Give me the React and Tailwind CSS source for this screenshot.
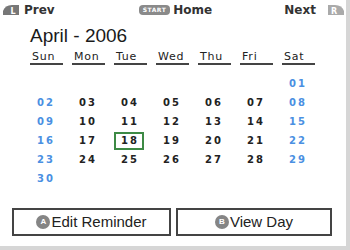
const weeks = [
  [null, null, null, null, null, null, '01'],
  ['02', '03', '04', '05', '06', '07', '08'],
  ['09', '10', '11', '12', '13', '14', '15'],
  ['16', '17', '18', '19', '20', '21', '22'],
  ['23', '24', '25', '26', '27', '28', '29'],
  ['30', null, null, null, null, null, null],
];

const days = ['Sun', 'Mon', 'Tue', 'Wed', 'Thu', 'Fri', 'Sat'];

function ShoulderIcon({ letter, flip, fill }) {
  return (
    <svg width="16" height="10" viewBox="0 0 16 10" className={flip ? '-scale-x-100' : ''}>
      <path d="M0 10 L0 6 Q2 0 9 0 L16 0 L16 10 Z" fill={fill} />
      <text x="10" y="8.5" fontSize="8" fontWeight="bold" fill="#fff" textAnchor="middle" fontFamily="DejaVu Sans, sans-serif" transform={flip ? 'translate(20 0) scale(-1 1)' : undefined}>{letter}</text>
    </svg>
  );
}

function ButtonIcon({ letter }) {
  return (
    <span className="w-[14px] h-[14px] rounded-full bg-[#858585] text-white text-[8px] font-bold leading-none flex items-center justify-center">
      {letter}
    </span>
  );
}

export default function App() {
  return (
    <div className="w-[350px] h-[250px] bg-white border-r-4 border-b-4 border-[#d6d6d6] flex flex-col font-['DejaVu_Sans',sans-serif] text-[#222]">
      <div className="h-[20px] flex items-center justify-between pl-[3px] pr-[2px] text-[12px] font-semibold text-[#333]">
        <div className="flex items-center gap-[5px]">
          <ShoulderIcon letter="L" fill="#777" />
          <span>Prev</span>
        </div>
        <div className="flex items-center gap-[3px] ml-[84px]">
          <span className="h-[10px] px-[4px] rounded-[4px] bg-[#8a8a8a] text-white text-[6px] font-bold leading-[10px] tracking-[0.5px]">START</span>
          <span>Home</span>
        </div>
        <div className="flex items-center gap-[12px] ml-auto">
          <span>Next</span>
          <ShoulderIcon letter="R" flip fill="#aaa" />
        </div>
      </div>

      <div className="ml-[30px] mt-[4px] text-[19px] leading-[24px] font-['Liberation_Sans',Arial,sans-serif] text-[#1a1a1a]">
        April - 2006
      </div>

      <div className="ml-[30px] mt-[3px] grid grid-cols-[repeat(7,33px)] gap-x-[9px]">
        {days.map((d) => (
          <div key={d} className="pl-[2px] text-[11px] leading-[12px] border-b-2 border-[#444] tracking-[0.8px]">
            {d}
          </div>
        ))}
      </div>

      <div className="ml-[30px] mt-[9px] flex flex-col">
        {weeks.map((w, i) => (
          <div key={i} className="grid grid-cols-[repeat(7,33px)] gap-x-[9px] h-[19px] items-center">
            {w.map((n, j) => {
              const weekend = j === 0 || j === 6;
              const today = n === '18';
              return (
                <div
                  key={j}
                  className={`w-[30px] h-[18px] flex items-center justify-center text-[10px] font-bold tracking-[2px] pl-[2px] ${
                    weekend ? 'text-[#4a90e2]' : 'text-[#222]'
                  } ${today ? 'border-2 border-[#3d8a45]' : ''}`}
                >
                  {n}
                </div>
              );
            })}
          </div>
        ))}
      </div>

      <div className="mt-auto mb-[10px] ml-[12px] flex gap-[5px] font-['Liberation_Sans',Arial,sans-serif] text-[15px] text-[#222]">
        <div className="w-[159px] h-[28px] border-2 border-[#444] flex items-center justify-center gap-[1px]">
          <ButtonIcon letter="A" />
          <span>Edit Reminder</span>
        </div>
        <div className="w-[156px] h-[28px] border-2 border-[#444] flex items-center justify-center gap-[1px]">
          <ButtonIcon letter="B" />
          <span>View Day</span>
        </div>
      </div>
    </div>
  );
}
